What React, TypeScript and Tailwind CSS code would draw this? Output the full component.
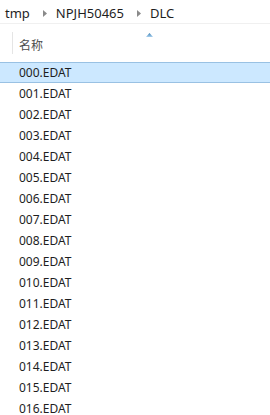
const files = Array.from({ length: 17 }, (_, i) => `${String(i).padStart(3, '0')}.EDAT`);

const Chevron = () => (
  <svg width="4" height="7" viewBox="0 0 4 7" className="ml-[13px] mr-[9px]">
    <path d="M0 0 L4 3.5 L0 7 Z" fill="#8a8a8a" />
  </svg>
);

export default function App() {
  return (
    <div className="w-[270px] h-[415px] overflow-hidden bg-white font-['Segoe_UI','Noto_Sans','Noto_Sans_CJK_SC',sans-serif] text-[#1e1e1e]">
      {/* breadcrumb */}
      <div className="h-[24px] flex items-center pt-[4px] pl-[5px] border-b border-[#f0f0f0] text-[13px]">
        <span>tmp</span>
        <Chevron />
        <span>NPJH50465</span>
        <Chevron />
        <span>DLC</span>
      </div>

      {/* column header */}
      <div className="relative h-[38px] flex items-center">
        <div className="ml-[12px] w-px h-[22px] bg-[#e5e5e5]" />
        <span className="ml-[6px] mt-[4px] text-[12px] text-[#4d4d4d] font-['Noto_Sans_CJK_SC',sans-serif]">名称</span>
        <svg width="7" height="4" viewBox="0 0 7 4" className="absolute left-[146px] top-[9px]">
          <defs>
            <linearGradient id="arr" x1="0" y1="0" x2="0" y2="1">
              <stop offset="0" stopColor="#3c7fb1" />
              <stop offset="1" stopColor="#a9d1f0" />
            </linearGradient>
          </defs>
          <path d="M0 4 L3.5 0 L7 4 Z" fill="url(#arr)" />
        </svg>
      </div>

      {/* file list */}
      <div className="flex flex-col">
        {files.map((f, i) => (
          <div
            key={f}
            className={`h-[21px] flex items-center pl-[19px] text-[12px] ${
              i === 0 ? 'bg-[#cce8ff] border-y border-[#99c1e3]' : ''
            }`}
          >
            {f}
          </div>
        ))}
      </div>
    </div>
  );
}
